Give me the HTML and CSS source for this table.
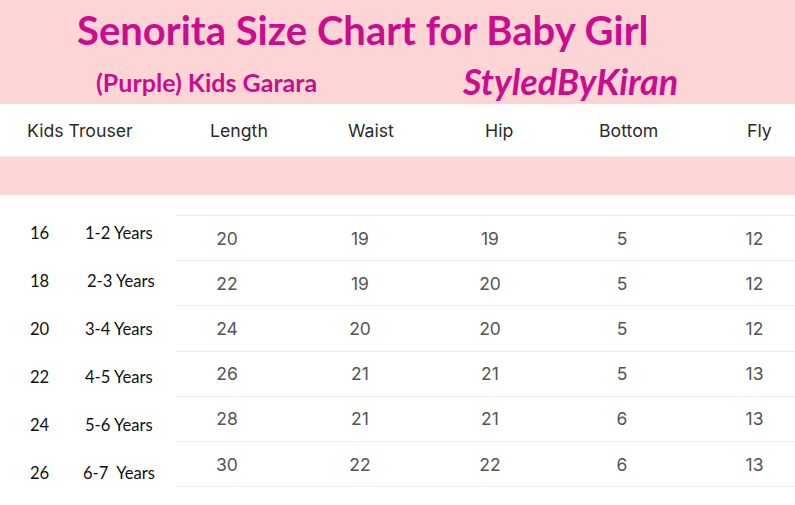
FILE: index.html
```html
<!DOCTYPE html>
<html>
<head>
<meta charset="utf-8">
<link rel="stylesheet" href="styles.css">
</head>
<body>
<div class="banner">
  <h1 class="title">Senorita Size Chart for Baby Girl</h1>
  <div class="subrow">
    <span class="sub">(Purple) Kids Garara</span>
    <span class="brand">StyledByKiran</span>
  </div>
</div>
<div class="thead">
  <span class="th first">Kids Trouser</span>
  <span class="th">Length</span>
  <span class="th">Waist</span>
  <span class="th">Hip</span>
  <span class="th">Bottom</span>
  <span class="th">Fly</span>
</div>
<div class="band"></div>
<div class="body">
  <div class="labels">
    <div class="lrow"><span class="size">16</span><span class="age">1-2 Years</span></div>
    <div class="lrow"><span class="size">18</span><span class="age a2">2-3 Years</span></div>
    <div class="lrow"><span class="size">20</span><span class="age">3-4 Years</span></div>
    <div class="lrow"><span class="size">22</span><span class="age">4-5 Years</span></div>
    <div class="lrow"><span class="size">24</span><span class="age">5-6 Years</span></div>
    <div class="lrow"><span class="size">26</span><span class="age a6">6-7&nbsp; Years</span></div>
  </div>
  <div class="table">
    <div class="tr"><span>20</span><span>19</span><span>19</span><span>5</span><span>12</span></div>
    <div class="tr"><span>22</span><span>19</span><span>20</span><span>5</span><span>12</span></div>
    <div class="tr"><span>24</span><span>20</span><span>20</span><span>5</span><span>12</span></div>
    <div class="tr"><span>26</span><span>21</span><span>21</span><span>5</span><span>13</span></div>
    <div class="tr"><span>28</span><span>21</span><span>21</span><span>6</span><span>13</span></div>
    <div class="tr"><span>30</span><span>22</span><span>22</span><span>6</span><span>13</span></div>
  </div>
</div>
</body>
</html>
```

FILE: styles.css
```css
* { box-sizing: border-box; }
html, body { margin: 0; padding: 0; background: #fff; }
body { width: 795px; height: 505px; overflow: hidden; font-family: Inter, "Noto Sans", sans-serif; }

.banner {
  background: #fdd5d5;
  height: 104px;
  padding-top: 8px;
  color: #cc0c8f;
  font-family: Lato, "Noto Sans", sans-serif;
  font-weight: 700;
}
.title {
  margin: 0;
  padding-left: 77px;
  font-size: 40px;
  line-height: 44px;
  font-weight: 700;
  white-space: nowrap;
}
.subrow {
  display: flex;
  align-items: flex-start;
  padding-left: 96px;
}
.sub { font-size: 25px; line-height: 30px; width: 367px; margin-top: 15px; white-space: nowrap; }
.brand { font-size: 36px; line-height: 40px; font-style: italic; margin-top: 9px; white-space: nowrap; }

.thead {
  height: 53px;
  display: grid;
  grid-template-columns: 210px 138px 137px 114px 148px 1fr;
  align-items: center;
  color: #2b2b2b;
  font-size: 17.7px;
  border-bottom: 1px solid #f2eded;
}
.th.first { padding-left: 27px; }

.band { height: 38px; background: #fdd5d5; }

.body { display: flex; }
.labels {
  width: 176px;
  padding-top: 14px;
  font-family: Lato, "Noto Sans", sans-serif;
  font-size: 16.6px;
  color: #111;
}
.lrow { height: 48px; display: flex; align-items: center; }
.size { width: 85px; padding-left: 30px; }
.age.a2 { padding-left: 2px; }
.age.a6 { margin-left: -2px; }

.table {
  flex: 1;
  margin-top: 20px;
  border-top: 1px solid #eeeeee;
}
.tr {
  height: 45.2px;
  display: grid;
  grid-template-columns: 102px 164px 96px 168px 1fr;
  align-items: center;
  text-align: center;
  border-bottom: 1px solid #eeeeee;
  color: #555;
  font-size: 17.5px;
}
.tr span:last-child { padding-left: 8px; }
```
